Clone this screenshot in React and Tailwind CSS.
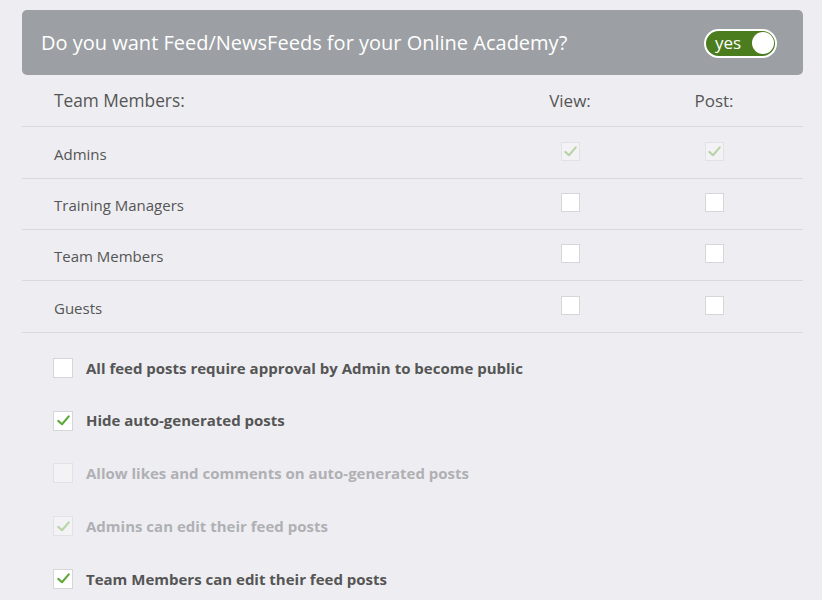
import React, { useState } from "react";

const Check = ({ faded }) => (
  <svg viewBox="0 0 20 20" className="w-[15px] h-[15px]">
    <path
      d="M3 10.5 L8 15 L17 4.5"
      fill="none"
      stroke={faded ? "#b9d3a6" : "#5fa83a"}
      strokeWidth="2.8"
      strokeLinecap="round"
      strokeLinejoin="round"
    />
  </svg>
);

const Box = ({ checked, faded, size = "w-[19px] h-[19px]" }) => (
  <div
    className={`${size} flex items-center justify-center border ${
      faded ? "bg-[#f3f3f6] border-[#e2e2e6]" : "bg-white border-[#d6d6da]"
    }`}
  >
    {checked && <Check faded={faded} />}
  </div>
);

const roles = [
  { name: "Admins", view: true, post: true, locked: true, h: "h-[52px]" },
  { name: "Training Managers", h: "h-[51px]" },
  { name: "Team Members", h: "h-[51px]" },
  { name: "Guests", h: "h-[52px]" },
];

const options = [
  { label: "All feed posts require approval by Admin to become public", checked: false },
  { label: "Hide auto-generated posts", checked: true },
  { label: "Allow likes and comments on auto-generated posts", checked: false, disabled: true },
  { label: "Admins can edit their feed posts", checked: true, disabled: true },
  { label: "Team Members can edit their feed posts", checked: true },
];

const App = () => {
  const [enabled, setEnabled] = useState(true);

  return (
    <div className="min-h-screen bg-[#eeeef2] pt-[10px] pl-[22px] pr-[19px] font-['Open_Sans',sans-serif] text-[#555]">
      {/* Header */}
      <div className="h-[65px] rounded-[5px] bg-[#9c9fa4] flex items-center justify-between pl-[19px] pr-[26px]">
        <h1 className="text-[20px] text-white">Do you want Feed/NewsFeeds for your Online Academy?</h1>
        <button
          onClick={() => setEnabled(!enabled)}
          className="w-[73px] h-[29px] rounded-full bg-[#4b7d1f] border-2 border-white flex items-center justify-between pl-[9px] pr-[1px] mt-[1px]"
        >
          <span className="text-white text-[17px] leading-none pb-[2px]">yes</span>
          <span className="w-[22px] h-[22px] rounded-full bg-white" />
        </button>
      </div>

      {/* Permissions table */}
      <div>
        <div className="h-[52px] flex items-center border-b border-[#d9d9dd] text-[17px]">
          <div className="flex-1 pl-[32px] text-[17.3px]">Team Members:</div>
          <div className="w-[144px] text-center">View:</div>
          <div className="w-[144px] text-center mr-[17px]">Post:</div>
        </div>
        {roles.map((r) => (
          <div key={r.name} className={`${r.h} flex items-center border-b border-[#d9d9dd] text-[15px]`}>
            <div className="flex-1 pl-[32px] pt-[3px]">{r.name}</div>
            <div className="w-[144px] flex justify-center pb-[3px]">
              <Box checked={r.view} faded={r.locked} />
            </div>
            <div className="w-[144px] flex justify-center pb-[3px] mr-[17px]">
              <Box checked={r.post} faded={r.locked} />
            </div>
          </div>
        ))}
      </div>

      {/* Options */}
      <div className="pl-[31px] pt-[25px] flex flex-col gap-[32.7px]">
        {options.map((o) => (
          <div key={o.label} className="flex items-center gap-[13px] h-[20px]">
            <Box checked={o.checked} faded={o.disabled} size="w-[20px] h-[20px]" />
            <span
              className={`text-[15px] font-bold ${o.disabled ? "text-[#b0b0b4]" : "text-[#555]"}`}
            >
              {o.label}
            </span>
          </div>
        ))}
      </div>
    </div>
  );
};

export default App;
